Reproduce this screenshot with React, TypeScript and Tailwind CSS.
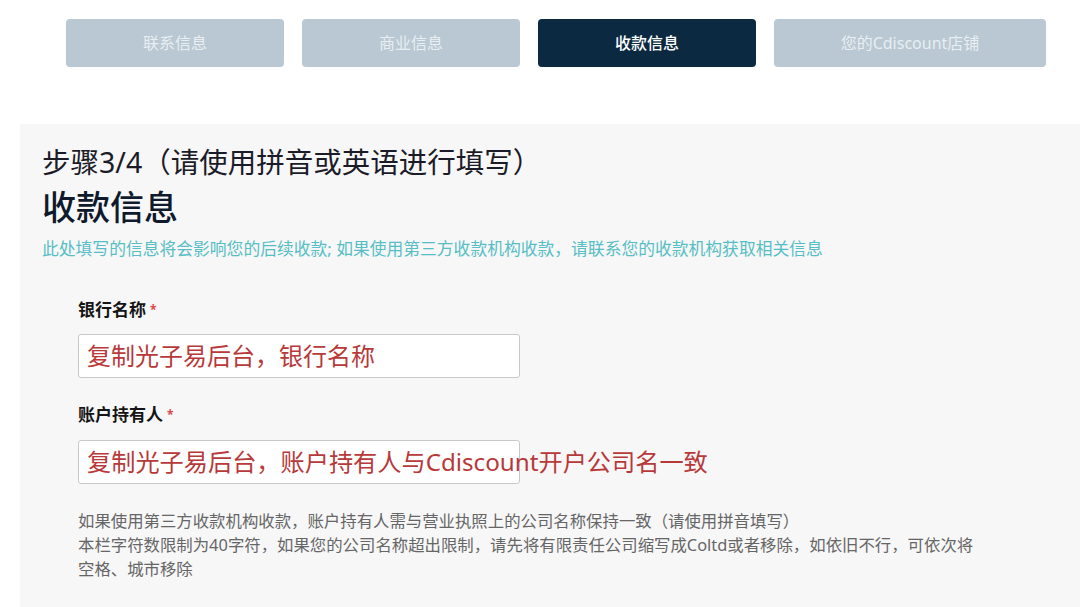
import React from "react";

const font = { fontFamily: '"Noto Sans", "Noto Sans CJK SC", sans-serif' };

function Tab({ label, active, w }: { label: string; active?: boolean; w: string }) {
  return (
    <div
      className={`${w} h-[48px] rounded-[4px] flex items-center justify-center text-[16px] ${
        active ? "bg-[#0b2940] text-white font-medium" : "bg-[#b9c8d2] text-[#e8eef2]"
      }`}
    >
      {label}
    </div>
  );
}

export default function App() {
  return (
    <div className="w-[1080px] h-[607px] overflow-hidden bg-white" style={font}>
      <div className="flex gap-[18px] pl-[66px] pt-[19px]">
        <Tab label="联系信息" w="w-[218px]" />
        <Tab label="商业信息" w="w-[218px]" />
        <Tab label="收款信息" w="w-[218px]" active />
        <Tab label="您的Cdiscount店铺" w="w-[272px]" />
      </div>
      <div className="ml-[20px] mt-[57px] bg-[#f7f7f8] h-[500px] pt-[20px]">
        <div className="pl-[22px]">
          <div className="text-[28.5px] leading-[36px] text-[#1c1c28]">步骤3/4（请使用拼音或英语进行填写）</div>
          <div className="mt-[5px] text-[34px] leading-[44px] font-medium text-[#0f1a2c]">收款信息</div>
          <div className="mt-[8px] text-[16.8px] leading-[24px] text-[#56bec4]">
            此处填写的信息将会影响您的后续收款; 如果使用第三方收款机构收款，请联系您的收款机构获取相关信息
          </div>
        </div>
        <div className="pl-[58px]">
          <div className="mt-[37px] text-[17px] leading-[24px] font-bold text-[#151515]">
            银行名称<span className="text-[#e0474c] text-[12px] align-top ml-[4px]">*</span>
          </div>
          <div className="mt-[12px] w-[442px] h-[44px] bg-white border border-[#c9c9c9] rounded-[3px] flex items-center pl-[8px] text-[24px] text-[#b8393a] whitespace-nowrap">
            复制光子易后台，银行名称
          </div>
          <div className="mt-[25px] text-[17px] leading-[24px] font-bold text-[#151515]">
            账户持有人<span className="text-[#e0474c] text-[12px] align-top ml-[4px]">*</span>
          </div>
          <div className="mt-[13px] w-[442px] h-[44px] bg-white border border-[#c9c9c9] rounded-[3px] flex items-center pl-[8px] text-[24.2px] text-[#b8393a] whitespace-nowrap overflow-visible">
            复制光子易后台，账户持有人与Cdiscount开户公司名一致
          </div>
          <div className="mt-[25px] text-[16.4px] leading-[24px] text-[#666666]">
            <div>如果使用第三方收款机构收款，账户持有人需与营业执照上的公司名称保持一致（请使用拼音填写）</div>
            <div>本栏字符数限制为40字符，如果您的公司名称超出限制，请先将有限责任公司缩写成Coltd或者移除，如依旧不行，可依次将</div>
            <div>空格、城市移除</div>
          </div>
        </div>
      </div>
    </div>
  );
}
